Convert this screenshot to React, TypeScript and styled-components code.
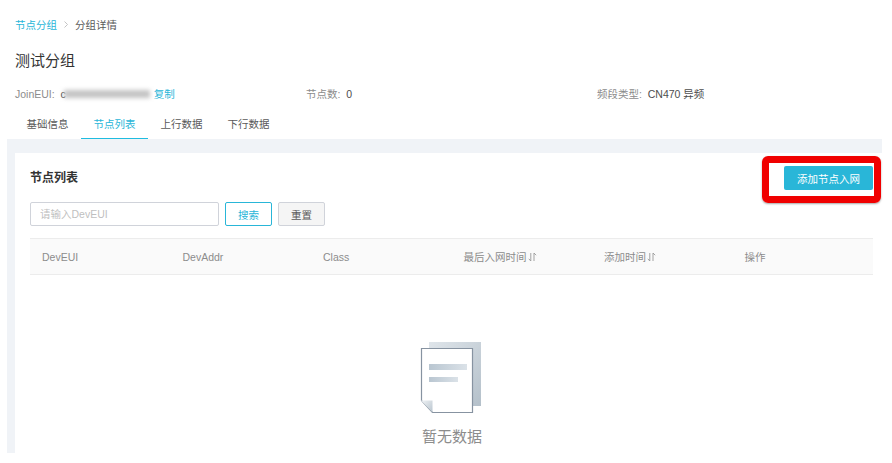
import React from "react";
import styled, { createGlobalStyle } from "styled-components";

const GlobalStyle = createGlobalStyle`
  html, body {
    margin: 0;
    padding: 0;
    background: #fff;
  }
  body {
    font-family: "Liberation Sans", "Noto Sans CJK SC", sans-serif;
    color: #595959;
  }
`;

const Page = styled.div`
  position: relative;
  width: 892px;
  height: 463px;
  overflow: hidden;
  background: #fff;
`;

//----- header -----
const Head = styled.div`
  padding: 18px 10px 0 15px;
`;
const Breadcrumb = styled.div`
  display: flex;
  align-items: center;
  height: 13px;
  font-size: 10.5px;
  color: #595959;
`;
const CrumbLink = styled.span`
  color: #29b6d8;
`;
const CrumbSep = styled.svg`
  width: 18px;
  height: 9px;
`;
const Title = styled.h1`
  margin: 21px 0 0;
  font-size: 15px;
  line-height: 18px;
  font-weight: 400;
  color: #333;
`;
const Meta = styled.div`
  display: grid;
  grid-template-columns: 291px 291px 1fr;
  margin-top: 17px;
  height: 14px;
  line-height: 14px;
  font-size: 10.5px;
  color: #8c8c8c;
`;
const MetaItem = styled.div`
  display: flex;
  align-items: center;
  white-space: pre;
`;
const MetaValue = styled.span`
  color: #4d4d4d;
`;
const Masked = styled.span`
  display: inline-block;
  width: 86px;
  height: 8px;
  margin: 0 4px 0 -2px;
  background: #c4c4c4;
  filter: blur(2px);
`;
const CopyLink = styled.span`
  font-size: 10.5px;
  color: #29b6d8;
`;
const Tabs = styled.div`
  display: flex;
  margin-top: 9px;
  margin-left: -1px;
`;
const Tab = styled.div<{ $active?: boolean }>`
  width: 67px;
  height: 29px;
  box-sizing: border-box;
  padding-top: 7px;
  line-height: 14px;
  text-align: center;
  font-size: 10.5px;
  color: ${(p) => (p.$active ? "#29b6d8" : "#595959")};
  border-bottom: 1px solid ${(p) => (p.$active ? "#1fbce0" : "transparent")};
`;

//----- content -----
const Content = styled.div`
  margin: 0 10px 0 7px;
  height: 314px;
  box-sizing: border-box;
  padding: 14px 0 0 8px;
  background: #f0f3f7;
`;
const Card = styled.div`
  height: 100%;
  box-sizing: border-box;
  padding: 12px 9px 0 15px;
  background: #fff;
`;
const CardHead = styled.div`
  display: flex;
  align-items: center;
  justify-content: space-between;
  height: 24px;
  margin-top: 1px;
`;
const CardTitle = styled.div`
  margin-bottom: 4px;
  font-size: 12px;
  font-weight: 700;
  color: #333;
`;
const PrimaryButton = styled.button`
  width: 89px;
  height: 24px;
  padding: 0;
  border: none;
  border-radius: 2px;
  background: #29b6d8;
  color: #fff;
  font-family: inherit;
  font-size: 10.5px;
`;
const Filters = styled.div`
  display: flex;
  gap: 6px;
  margin-top: 12px;
`;
const SearchInput = styled.input`
  width: 189px;
  height: 24px;
  box-sizing: border-box;
  padding: 0 9px;
  border: 1px solid #d0d3da;
  border-radius: 2px;
  outline: none;
  font-family: inherit;
  font-size: 10.5px;
  &::placeholder {
    color: #bfbfbf;
  }
`;
const FilterButton = styled.button<{ $primary?: boolean }>`
  width: 47px;
  height: 24px;
  padding: 0;
  box-sizing: border-box;
  border: 1px solid ${(p) => (p.$primary ? "#29b6d8" : "#d0d3da")};
  border-radius: 2px;
  background: ${(p) => (p.$primary ? "#fff" : "#f5f5f5")};
  color: ${(p) => (p.$primary ? "#29b6d8" : "#595959")};
  font-family: inherit;
  font-size: 10.5px;
`;
const TableHead = styled.div`
  display: grid;
  grid-template-columns: repeat(6, 140.5px);
  align-items: center;
  height: 37px;
  margin-top: 12px;
  box-sizing: border-box;
  background: #fafafa;
  border-top: 1px solid #ececec;
  border-bottom: 1px solid #ececec;
`;
const HeadCell = styled.div`
  display: flex;
  align-items: center;
  gap: 1px;
  padding-left: 12px;
  font-size: 10.5px;
  color: #8c8c8c;
`;
const SortIcon = styled.svg`
  width: 9px;
  height: 10px;
`;
const Empty = styled.div`
  display: flex;
  flex-direction: column;
  align-items: center;
  margin-top: 67px;
  margin-left: 1px;
`;
const EmptyIcon = styled.svg`
  width: 61px;
  height: 71px;
  margin-right: 4px;
`;
const EmptyText = styled.div`
  margin-top: 15px;
  font-size: 15px;
  line-height: 18px;
  color: #8c8c8c;
`;

// red annotation drawn over the screenshot
const Highlight = styled.div`
  position: absolute;
  left: 762px;
  top: 156px;
  width: 119px;
  height: 47px;
  box-sizing: border-box;
  border: 7px solid #f00000;
  border-radius: 6px;
  box-shadow: 0 1px 2px rgba(0, 0, 0, 0.35);
`;

const Sort = () => (
  <SortIcon viewBox="0 0 9 10" fill="none" stroke="#999" strokeWidth="0.9">
    <path d="M2.8 1v8L.8 6.8" />
    <path d="M6 9V1l2.2 2.2" />
  </SortIcon>
);

const columns = [
  { name: "DevEUI" },
  { name: "DevAddr" },
  { name: "Class" },
  { name: "最后入网时间", sortable: true },
  { name: "添加时间", sortable: true },
  { name: "操作" },
];

const App = () => {
  return (
    <Page>
      <GlobalStyle />
      <Head>
        <Breadcrumb>
          <CrumbLink>节点分组</CrumbLink>
          <CrumbSep viewBox="0 0 18 9" fill="none" stroke="#b5b5b5" strokeWidth="0.8">
            <path d="M7.5 1.5 10.5 4.5 7.5 7.5" />
          </CrumbSep>
          <span>分组详情</span>
        </Breadcrumb>
        <Title>测试分组</Title>
        <Meta>
          <MetaItem>
            JoinEUI:  <MetaValue>c</MetaValue>
            <Masked />
            <CopyLink>复制</CopyLink>
          </MetaItem>
          <MetaItem>
            节点数:  <MetaValue>0</MetaValue>
          </MetaItem>
          <MetaItem>
            频段类型:  <MetaValue>CN470 异频</MetaValue>
          </MetaItem>
        </Meta>
        <Tabs>
          <Tab>基础信息</Tab>
          <Tab $active>节点列表</Tab>
          <Tab>上行数据</Tab>
          <Tab>下行数据</Tab>
        </Tabs>
      </Head>
      <Content>
        <Card>
          <CardHead>
            <CardTitle>节点列表</CardTitle>
            <PrimaryButton>添加节点入网</PrimaryButton>
          </CardHead>
          <Filters>
            <SearchInput placeholder="请输入DevEUI" />
            <FilterButton $primary>搜索</FilterButton>
            <FilterButton>重置</FilterButton>
          </Filters>
          <TableHead>
            {columns.map((col) => (
              <HeadCell key={col.name}>
                {col.name}
                {col.sortable && <Sort />}
              </HeadCell>
            ))}
          </TableHead>
          <Empty>
            <EmptyIcon viewBox="0 0 61 71">
              <defs>
                <linearGradient id="back" x1="0" y1="0" x2="1" y2="1">
                  <stop offset="0" stopColor="#dfe5ea" />
                  <stop offset="1" stopColor="#b4c0ca" />
                </linearGradient>
                <linearGradient id="bar" x1="0" y1="0" x2="1" y2="0">
                  <stop offset="0" stopColor="#b9c6d1" />
                  <stop offset="1" stopColor="#dbe2e8" />
                </linearGradient>
                <linearGradient id="fold" x1="0" y1="0" x2="1" y2="1">
                  <stop offset="0" stopColor="#f0f3f5" />
                  <stop offset="1" stopColor="#b8c4ce" />
                </linearGradient>
              </defs>
              <rect x="9" y="0" width="52" height="64" fill="url(#back)" />
              <path d="M1.5 6.5H52.5V70.5H12.5L1.5 58.5Z" fill="#fff" stroke="#8793a1" strokeWidth="1.2" />
              <path d="M1 58.5H12.5V70.5Z" fill="url(#fold)" />
              <rect x="9" y="22" width="38" height="6" fill="url(#bar)" />
              <rect x="9" y="35" width="29" height="5" fill="url(#bar)" />
            </EmptyIcon>
            <EmptyText>暂无数据</EmptyText>
          </Empty>
        </Card>
      </Content>
      <Highlight />
    </Page>
  );
};

export default App;
